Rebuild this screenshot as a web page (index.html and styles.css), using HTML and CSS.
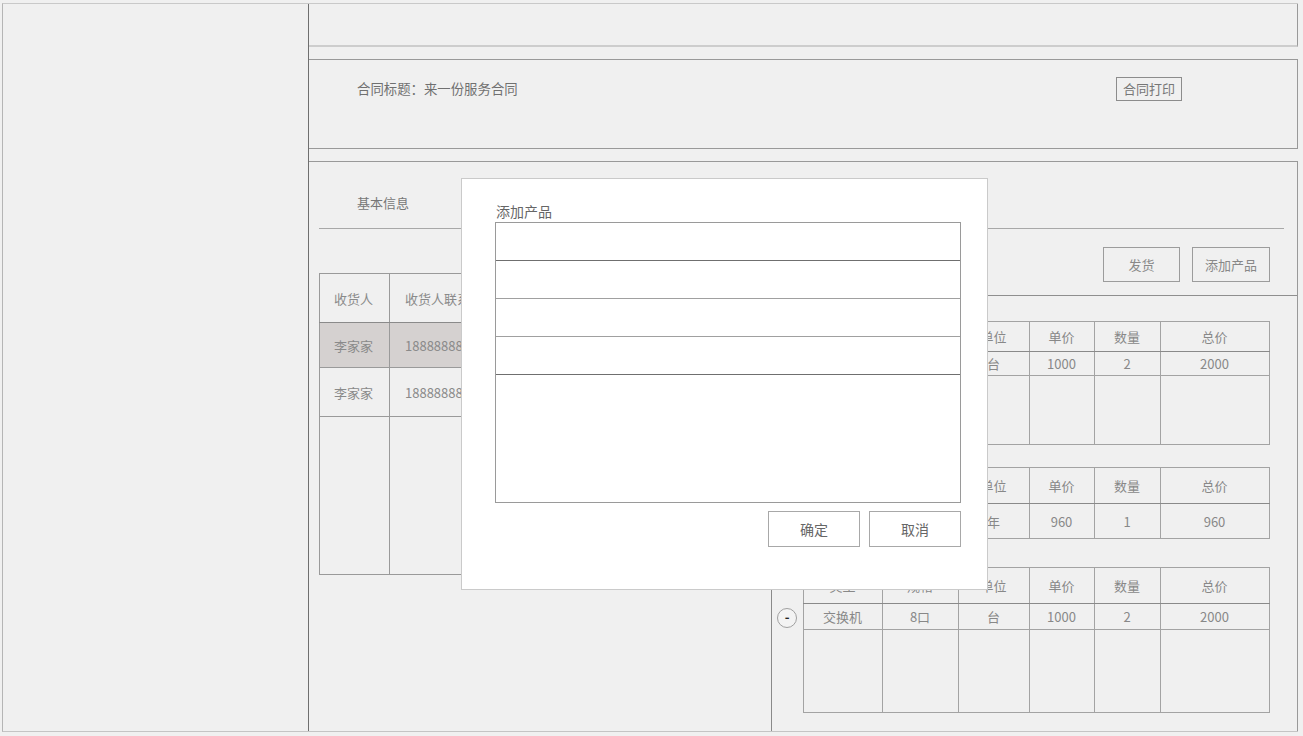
FILE: index.html
```html
<!DOCTYPE html>
<html lang="zh-CN">
<head>
<meta charset="utf-8">
<title>合同详情</title>
<link rel="stylesheet" href="styles.css">
</head>
<body>
<div class="app">
  <aside class="sidebar"></aside>
  <div class="content">
    <div class="topbar"></div>
    <div class="title-panel">
      <span class="title-text">合同标题：来一份服务合同</span>
      <button class="print-btn">合同打印</button>
    </div>
    <div class="main-panel">
      <div class="tabs"><span class="tab">基本信息</span></div>
      <div class="body">
        <div class="left">
          <table class="receiver">
            <colgroup><col class="rc1"><col class="rc2"><col class="rc3"><col class="rc4"></colgroup>
            <tr class="r-head"><td>收货人</td><td>收货人联系方式</td><td></td><td></td></tr>
            <tr class="r-row r-sel"><td>李家家</td><td>18888888888</td><td></td><td></td></tr>
            <tr class="r-row2"><td>李家家</td><td>18888888888</td><td></td><td></td></tr>
            <tr class="r-empty"><td></td><td></td><td></td><td></td></tr>
          </table>
        </div>
        <div class="right">
          <div class="toolbar">
            <button class="tool-btn">发货</button>
            <button class="tool-btn tool-wide">添加产品</button>
          </div>
          <div class="products">
            <table class="prod prod-a">
              <colgroup><col class="c0"><col class="c1"><col class="c2"><col class="c3"><col class="c4"><col class="c5"><col class="c6"></colgroup>
              <tr class="p-head"><td class="gut"></td><td></td><td></td><td>单位</td><td>单价</td><td>数量</td><td>总价</td></tr>
              <tr class="p-row"><td class="gut"><span class="minus">-</span></td><td></td><td></td><td>台</td><td>1000</td><td>2</td><td>2000</td></tr>
              <tr class="p-empty"><td class="gut"></td><td></td><td></td><td></td><td></td><td></td><td></td></tr>
            </table>
            <table class="prod prod-b">
              <colgroup><col class="c0"><col class="c1"><col class="c2"><col class="c3"><col class="c4"><col class="c5"><col class="c6"></colgroup>
              <tr class="p-head"><td class="gut"></td><td></td><td></td><td>单位</td><td>单价</td><td>数量</td><td>总价</td></tr>
              <tr class="p-row"><td class="gut"><span class="minus">-</span></td><td></td><td></td><td>年</td><td>960</td><td>1</td><td>960</td></tr>
            </table>
            <table class="prod prod-c">
              <colgroup><col class="c0"><col class="c1"><col class="c2"><col class="c3"><col class="c4"><col class="c5"><col class="c6"></colgroup>
              <tr class="p-head"><td class="gut"></td><td>类型</td><td>规格</td><td>单位</td><td>单价</td><td>数量</td><td>总价</td></tr>
              <tr class="p-row"><td class="gut"><span class="minus">-</span></td><td>交换机</td><td>8口</td><td>台</td><td>1000</td><td>2</td><td>2000</td></tr>
              <tr class="p-empty"><td class="gut"></td><td></td><td></td><td></td><td></td><td></td><td></td></tr>
            </table>
          </div>
        </div>
      </div>
    </div>
  </div>
</div>

<div class="modal">
  <div class="modal-title">添加产品</div>
  <div class="modal-list">
    <div class="modal-row dark"></div>
    <div class="modal-row"></div>
    <div class="modal-row"></div>
    <div class="modal-row dark"></div>
    <div class="modal-area"></div>
  </div>
  <div class="modal-actions">
    <button class="modal-btn">确定</button>
    <button class="modal-btn">取消</button>
  </div>
</div>
</body>
</html>
```

FILE: styles.css
```css
* { box-sizing: border-box; }

html, body {
  margin: 0;
  padding: 0;
  background: #f0f0f0;
  font-family: "Noto Sans CJK SC", "Noto Sans", "Liberation Sans", sans-serif;
  color: #888;
}

button {
  font-family: inherit;
  margin: 0;
  cursor: pointer;
}

.app {
  margin: 3px 0 0 2px;
  width: 1296px;
  height: 729px;
  display: flex;
  border-top: 1px solid #c9c9c9;
  border-left: 1px solid #b5b5b5;
  border-bottom: 1px solid #c4c4c4;
}

.sidebar {
  width: 306px;
  border-right: 1px solid #6f6f6f;
  flex: none;
}

.content {
  flex: 1;
  display: flex;
  flex-direction: column;
}

.topbar {
  height: 43px;
  border-bottom: 2px solid #cdcdcd;
  border-right: 1px solid #999;
  flex: none;
}

.title-panel {
  margin-top: 12px;
  height: 90px;
  flex: none;
  border-top: 1px solid #999;
  border-bottom: 1px solid #999;
  border-right: 1px solid #999;
  display: flex;
  align-items: flex-start;
  padding: 17px 115px 0 48px;
}

.title-text {
  font-size: 13.4px;
  line-height: 22px;
  color: #707070;
}

.print-btn {
  margin-left: auto;
  height: 24px;
  padding: 0 6px;
  font-size: 13px;
  line-height: 20px;
  color: #777;
  background: transparent;
  border: 1px solid #8c8c8c;
}

.main-panel {
  margin-top: 12px;
  flex: 1;
  display: flex;
  flex-direction: column;
  border-top: 1px solid #999;
  border-right: 1px solid #999;
}

.tabs {
  height: 67px;
  flex: none;
  margin: 0 13px 0 10px;
  border-bottom: 1px solid #a8a8a8;
  padding: 30px 0 0 38px;
  display: flex;
}

.tab {
  font-size: 13px;
  line-height: 22px;
  color: #777;
}

.body {
  flex: 1;
  display: flex;
}

.left {
  width: 462px;
  flex: none;
  padding: 44px 0 0 10px;
}

.receiver {
  border-collapse: collapse;
  table-layout: fixed;
  width: 437px;
}

.receiver .rc1 { width: 70px; }
.receiver .rc2 { width: 126px; }
.receiver .rc3 { width: 120px; }
.receiver .rc4 { width: 121px; }

.receiver td {
  border: 1px solid #9a9a9a;
  font-size: 13px;
  color: #8a8a8a;
  padding: 0 0 0 14px;
  white-space: nowrap;
  overflow: hidden;
}

.receiver td:nth-child(2) { padding-left: 15px; }

.receiver .r-head { height: 49px; }
.receiver .r-row { height: 45px; }
.receiver .r-row2 { height: 49px; }
.receiver .r-empty { height: 158px; }
.receiver .r-sel td { background: #d5d1d0; }
.receiver .r-head td { border-bottom-color: #8a8a8a; }

.right {
  flex: 1;
  display: flex;
  flex-direction: column;
  border-left: 1px solid #8a8a8a;
}

.toolbar {
  height: 67px;
  flex: none;
  border-bottom: 1px solid #8f8f8f;
  display: flex;
  justify-content: flex-end;
  align-items: flex-start;
  gap: 12px;
  padding: 18px 27px 0 0;
}

.tool-btn {
  width: 77px;
  height: 35px;
  padding: 0;
  font-size: 13px;
  color: #888;
  background: transparent;
  border: 1px solid #9c9c9c;
}

.tool-wide { width: 78px; }

.products {
  padding-top: 25px;
}

.prod {
  border-collapse: collapse;
  table-layout: fixed;
  width: 497px;
}

.prod .c0 { width: 31px; }
.prod .c1 { width: 79px; }
.prod .c2 { width: 76px; }
.prod .c3 { width: 71px; }
.prod .c4 { width: 65px; }
.prod .c5 { width: 66px; }
.prod .c6 { width: 109px; }

.prod td {
  border: 1px solid #a3a3a3;
  font-size: 13px;
  color: #888;
  text-align: center;
  vertical-align: middle;
  padding: 0;
  white-space: nowrap;
}

.prod td.gut {
  border: none;
}

.prod .p-head td:not(.gut) { border-bottom-color: #8a8a8a; }

.prod-a { margin-bottom: 22px; }
.prod-a .p-head { height: 30px; }
.prod-a .p-row { height: 24px; }
.prod-a .p-empty { height: 69px; }

.prod-b { margin-bottom: 28px; }
.prod-b .p-head { height: 36px; }
.prod-b .p-row { height: 35px; }

.prod-c .p-head { height: 36px; }
.prod-c .p-row { height: 26px; }
.prod-c .p-empty { height: 83px; }

.prod-c .p-row .gut { padding-top: 2px; }

.minus {
  display: inline-block;
  width: 20px;
  height: 20px;
  border: 1px solid #a0a0a0;
  border-radius: 50%;
  font-size: 13px;
  font-weight: bold;
  line-height: 16px;
  color: #222;
  background: #f3f3f3;
  text-align: center;
}

.modal {
  position: absolute;
  left: 461px;
  top: 178px;
  width: 527px;
  height: 412px;
  background: #fff;
  border: 1px solid #cacaca;
  padding: 22px 26px 0 33px;
}

.modal-title {
  font-size: 14px;
  line-height: 20px;
  color: #666;
  padding-left: 1px;
  margin-bottom: 1px;
}

.modal-list {
  border: 1px solid #9a9a9a;
  width: 466px;
}

.modal-row {
  height: 38px;
  border-bottom: 1px solid #a0a0a0;
}

.modal-row.dark { border-bottom-color: #6f6f6f; }

.modal-area {
  height: 127px;
}

.modal-actions {
  display: flex;
  justify-content: flex-end;
  gap: 9px;
  margin-top: 8px;
  width: 466px;
}

.modal-btn {
  width: 92px;
  height: 36px;
  padding: 0;
  font-size: 14px;
  color: #666;
  background: #fff;
  border: 1px solid #a8a8a8;
}
```
